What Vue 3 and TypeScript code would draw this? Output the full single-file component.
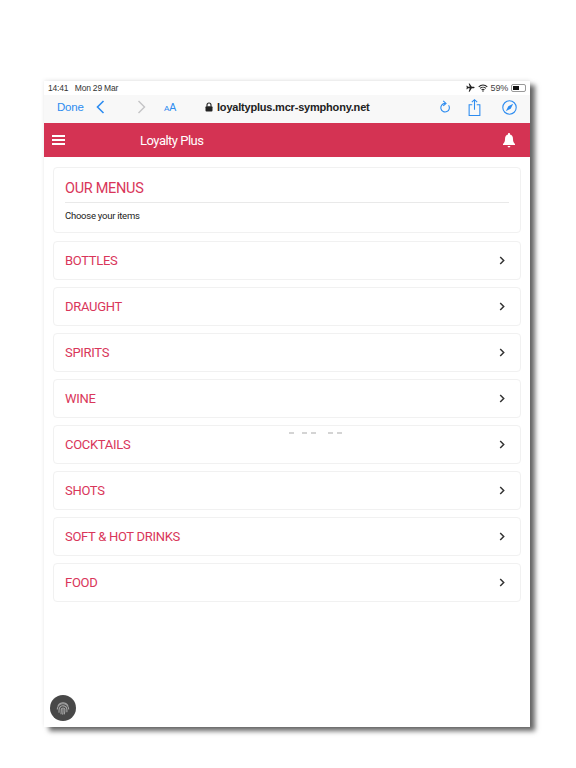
<template>
  <div class="page">
    <div class="tablet">
      <div class="status-bar">
        <span>14:41&nbsp;&nbsp; Mon 29 Mar</span>
        <div class="status-right">
          <svg width="9" height="9" viewBox="0 0 12 12"><path d="M11.500 6c0-.6-.8-1-1.600-1H7.700L4.800.5H3.600L5 5H2.600L1.500 3.600H.5L1.100 6 .5 8.400h1L2.600 7H5l-1.400 4.500h1.200L7.700 7h2.200c.8 0 1.600-.4 1.600-1z" fill="#222"/></svg>
          <svg width="10" height="8" viewBox="0 0 14 11"><path d="M1 3.800a8.600 8.600 0 0 1 12 0M3 6a5.700 5.700 0 0 1 8 0M5 8a2.800 2.800 0 0 1 4 0" fill="none" stroke="#222" stroke-width="1.500"/><circle cx="7" cy="9.600" r="1.100" fill="#222"/></svg>
          <span class="battery-pct">59%</span>
          <span class="battery"><span class="battery-fill" :style="{ width: batteryLevel + '%' }"></span></span>
        </div>
      </div>

      <div class="browser-bar">
        <span class="done">Done</span>
        <svg class="nav-back" width="9" height="14" viewBox="0 0 9 14"><path d="M7.500 1 1.500 7l6 6" fill="none" stroke="#2d8cf0" stroke-width="1.600"/></svg>
        <svg class="nav-forward" width="9" height="14" viewBox="0 0 9 14"><path d="M1.500 1l6 6-6 6" fill="none" stroke="#c4c4c6" stroke-width="1.400"/></svg>
        <span class="reader"><small>A</small>A</span>
        <div class="url">
          <svg width="8" height="10" viewBox="0 0 8 10"><path d="M2 4.500V3a2 2 0 0 1 4 0v1.500" fill="none" stroke="#222" stroke-width="1.100"/><rect x=".5" y="4.200" width="7" height="5.400" rx="1" fill="#222"/></svg>
          <span>loyaltyplus.mcr-symphony.net</span>
        </div>
        <svg class="tool reload" width="12" height="14" viewBox="0 0 12 14"><path d="M9.600 5.200A4.300 4.300 0 1 1 6 3.400" fill="none" stroke="#2d8cf0" stroke-width="1.100"/><path d="M4.200.8 7 3.400 4.200 5.800" fill="none" stroke="#2d8cf0" stroke-width="1.100"/></svg>
        <svg class="tool share" width="13" height="17" viewBox="0 0 14 19"><path d="M4.500 6.500H1v12h12v-12H9.500M7 12V1M4 3.500 7 .8l3 2.700" fill="none" stroke="#2d8cf0" stroke-width="1.200"/></svg>
        <svg class="tool compass" width="15" height="15" viewBox="0 0 15 15"><circle cx="7.500" cy="7.500" r="6.700" fill="none" stroke="#2d8cf0" stroke-width="1.100"/><path d="M11.200 3.800 8.700 8.700 3.800 11.200 6.300 6.300z" fill="#2d8cf0"/></svg>
      </div>

      <header class="app-header">
        <button class="hamburger" aria-label="Menu"><i></i><i></i><i></i></button>
        <span class="app-title">Loyalty Plus</span>
        <svg class="bell" width="12" height="15" viewBox="0 0 12 15"><path d="M6 0c.6 0 1 .4 1 1v.6c2 .5 3 2.200 3 4.400 0 2.500.7 3.700 2 5V12H0v-1c1.300-1.300 2-2.500 2-5 0-2.200 1-3.900 3-4.400V1c0-.6.400-1 1-1zM4.600 13h2.800a1.400 1.400 0 0 1-2.800 0z" fill="#fff"/></svg>
      </header>

      <main class="content">
        <section class="card intro">
          <h1>OUR MENUS</h1>
          <p>Choose your items</p>
        </section>
        <div v-for="item in menus" :key="item" class="card row">
          <span class="row-label">{{ item }}</span>
          <svg width="6" height="9" viewBox="0 0 6 9"><path d="M1.200 1 4.700 4.500 1.200 8" fill="none" stroke="#333" stroke-width="1.500"/></svg>
          <div v-if="item === 'COCKTAILS'" class="dashes">
            <i></i><i class="far"></i><i></i><i class="farther"></i><i></i>
          </div>
        </div>
      </main>

      <button class="fab" aria-label="Fingerprint">
        <svg width="14" height="14" viewBox="0 0 14 14" fill="none" stroke="#a6a6a6" stroke-width="1.100" stroke-linecap="round">
          <path d="M2.200 4.500A5.500 5.500 0 0 1 11.800 4.500"/>
          <path d="M1.300 8A5.700 5.700 0 0 1 7 2.800 5.700 5.700 0 0 1 12.700 8"/>
          <path d="M3 11.200C3 9 3 8.500 3.300 7.500A3.900 3.900 0 0 1 10.900 8.500V10.800"/>
          <path d="M5 12.800C5.300 11 5.200 10 5.200 8.500A1.900 1.900 0 0 1 8.900 8.500C8.900 10 8.800 11.500 8.300 12.900"/>
          <path d="M7 8V10.500C7 11.200 6.900 12.200 6.700 13.200"/>
        </svg>
      </button>
    </div>
  </div>
</template>

<script setup lang="ts">
const batteryLevel = 59

const menus: string[] = [
  'BOTTLES',
  'DRAUGHT',
  'SPIRITS',
  'WINE',
  'COCKTAILS',
  'SHOTS',
  'SOFT & HOT DRINKS',
  'FOOD'
]
</script>

<style>
html, body {
  background: #fff;
}
</style>

<style scoped>
.page {
  width: 576px;
  height: 768px;
  padding: 81px 0 0 44px;
  box-sizing: border-box;
  overflow: hidden;
  font-family: "Roboto", "Noto Sans", sans-serif;
}

.tablet {
  position: relative;
  width: 486px;
  height: 646px;
  background: #fff;
  box-shadow: 5px 4px 5px rgba(0, 0, 0, 0.6), 0 -1px 4px rgba(0, 0, 0, 0.08);
}

.status-bar {
  height: 14px;
  padding: 0 4px 1px;
  box-sizing: border-box;
  display: flex;
  justify-content: space-between;
  align-items: center;
  font-family: "Liberation Sans", sans-serif;
  font-size: 8.500px;
  letter-spacing: -0.2px;
  color: #333;
  background: #fff;
}

.status-right {
  display: flex;
  align-items: center;
  gap: 3px;
}

.battery-pct {
  font-size: 9px;
  color: #444;
}

.battery {
  width: 15px;
  height: 8px;
  border: 1px solid #999;
  border-radius: 2px;
  padding: 1px;
  box-sizing: border-box;
  display: flex;
}

.battery-fill {
  background: #111;
  height: 100%;
}

.browser-bar {
  height: 28px;
  display: flex;
  align-items: center;
  padding: 0 13px 4px;
  box-sizing: border-box;
  background: #f8f8f8;
  font-family: "Liberation Sans", sans-serif;
}

.done {
  width: 26px;
  font-size: 11.500px;
  letter-spacing: -0.2px;
  white-space: nowrap;
  color: #2d8cf0;
}

.nav-back {
  margin-left: 13px;
}

.nav-forward {
  margin-left: 32px;
}

.reader {
  margin-left: 18px;
  width: 14px;
  font-size: 10.500px;
  color: #2d8cf0;
}

.reader small {
  font-size: 8px;
}

.url {
  display: flex;
  align-items: center;
  gap: 4px;
  margin-left: 27px;
  font-size: 11px;
  font-weight: 700;
  letter-spacing: -0.2px;
  white-space: nowrap;
  color: #222;
}

.tool {
  flex: none;
}

.reload {
  margin-left: auto;
}

.share {
  margin-left: 17px;
}

.compass {
  margin-left: 21px;
}

.app-header {
  height: 34px;
  display: flex;
  align-items: center;
  padding: 0 15px 0 8px;
  background: #d43353;
  color: #fff;
}

.hamburger {
  width: 13px;
  height: 10px;
  padding: 0;
  border: none;
  background: none;
  display: flex;
  flex-direction: column;
  justify-content: space-between;
}

.hamburger i {
  display: block;
  height: 2px;
  width: 100%;
  background: #fff;
}

.app-title {
  flex: 1;
  margin-left: 75px;
  font-size: 13px;
  letter-spacing: -0.5px;
}

.content {
  padding: 10px 9px 0;
  display: flex;
  flex-direction: column;
  gap: 7px;
}

.card {
  box-sizing: border-box;
  background: #fff;
  border: 1px solid #f1f1f1;
  border-radius: 4px;
}

.intro {
  height: 66px;
  padding: 12px 11px 0;
  margin-bottom: 1px;
}

.intro h1 {
  margin: 0;
  padding-bottom: 4px;
  font-size: 14.500px;
  letter-spacing: -0.3px;
  line-height: 18px;
  font-weight: 400;
  color: #d9365a;
  border-bottom: 1px solid #e9e9e9;
}

.intro p {
  margin: 7px 0 0;
  font-size: 9.500px;
  letter-spacing: -0.25px;
  color: #222;
}

.row {
  position: relative;
  height: 39px;
  padding: 0 15px 1px 11px;
  display: flex;
  align-items: center;
  justify-content: space-between;
}

.row-label {
  font-size: 13px;
  letter-spacing: -0.3px;
  color: #d9365a;
}

/* faint marks at the top of the cocktails card */
.dashes {
  position: absolute;
  top: 6px;
  left: 235px;
  display: flex;
  gap: 4px;
}

.dashes i {
  display: block;
  width: 5px;
  height: 2px;
  background: #d4d4d4;
}

.dashes .far {
  margin-left: 4px;
}

.dashes .farther {
  margin-left: 8px;
}

.fab {
  position: absolute;
  left: 6px;
  bottom: 6px;
  width: 26px;
  height: 26px;
  padding: 0;
  border: none;
  border-radius: 50%;
  background: #484848;
  display: flex;
  align-items: center;
  justify-content: center;
}
</style>
